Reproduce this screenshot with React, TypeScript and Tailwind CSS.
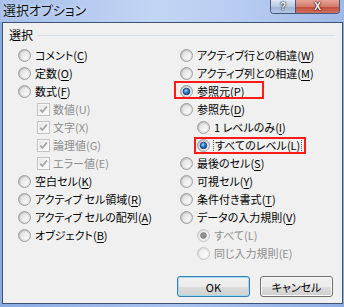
import React from "react";

function Radio({ checked = false, disabled = false }: { checked?: boolean; disabled?: boolean }) {
  const k = disabled ? "d" : "n";
  return (
    <svg width="13" height="13" viewBox="0 0 13 13" className="shrink-0">
      <defs>
        <linearGradient id={`ro-${k}`} x1="0" y1="0" x2="1" y2="1">
          <stop offset="0" stopColor={disabled ? "#d6d6d6" : "#b4b4b4"} />
          <stop offset="1" stopColor={disabled ? "#f6f6f6" : "#f3f3f3"} />
        </linearGradient>
        <linearGradient id={`ri-${k}`} x1="0" y1="0" x2="1" y2="1">
          <stop offset="0" stopColor={disabled ? "#ececec" : "#dcdcdc"} />
          <stop offset="1" stopColor="#ffffff" />
        </linearGradient>
        <radialGradient id="rdot" cx="0.4" cy="0.35" r="0.7">
          <stop offset="0" stopColor="#9ad6ff" />
          <stop offset="0.5" stopColor="#2a7ccd" />
          <stop offset="1" stopColor="#0e3c82" />
        </radialGradient>
      </defs>
      <circle cx="6.5" cy="6.5" r="6" fill={`url(#ro-${k})`} stroke={disabled ? "#c6c6c6" : "#a0a0a0"} />
      <circle cx="6.5" cy="6.5" r="4.2" fill={`url(#ri-${k})`} />
      {checked &&
        (disabled ? (
          <circle cx="6.5" cy="6.5" r="3" fill="#909090" stroke="#777" strokeWidth="0.6" />
        ) : (
          <circle cx="6.5" cy="6.5" r="3.3" fill="url(#rdot)" stroke="#0c3370" strokeWidth="0.8" />
        ))}
    </svg>
  );
}

function Check() {
  return (
    <svg width="13" height="13" viewBox="0 0 13 13" className="shrink-0">
      <defs>
        <linearGradient id="cbg" x1="0" y1="0" x2="1" y2="1">
          <stop offset="0" stopColor="#e6e6e6" />
          <stop offset="1" stopColor="#fdfdfd" />
        </linearGradient>
      </defs>
      <rect x="0.5" y="0.5" width="12" height="12" fill="#f6f6f6" stroke="#c2c2c2" />
      <rect x="2" y="2" width="9" height="9" fill="url(#cbg)" />
      <path d="M3.2 6.6 L5.4 9 L9.8 3.6" stroke="#a4a4a4" strokeWidth="1.7" fill="none" />
    </svg>
  );
}

function Text({ label, m, disabled = false }: { label: string; m: string; disabled?: boolean }) {
  return (
    <span className={`whitespace-pre ${disabled ? "text-[#8e8e8e]" : "text-black"}`}>
      {label}(
      {disabled ? m : <u className="underline decoration-1 underline-offset-[2px]">{m}</u>})
    </span>
  );
}

function RRow({
  label,
  m,
  checked,
  disabled,
  indent = false,
}: {
  label: string;
  m: string;
  checked?: boolean;
  disabled?: boolean;
  indent?: boolean;
}) {
  return (
    <div className={`flex h-[18px] items-center gap-[4px] ${indent ? "pl-[17px]" : ""}`}>
      <Radio checked={checked} disabled={disabled} />
      <Text label={label} m={m} disabled={disabled} />
    </div>
  );
}

function CRow({ label, m }: { label: string; m: string }) {
  return (
    <div className="flex h-[18px] items-center gap-[3px] pl-[19px]">
      <Check />
      <Text label={label} m={m} disabled />
    </div>
  );
}

export default function App() {
  return (
    <div className="flex h-[307px] w-[344px] flex-col overflow-hidden bg-[linear-gradient(to_right,#8aabe2,#a9c3ee_50%,#8eaee3)] font-['Noto_Sans_CJK_JP',sans-serif] text-[11px] leading-[18px] [font-feature-settings:'palt']">
      {/* title bar */}
      <div className="flex h-[22px] shrink-0 items-start bg-[linear-gradient(to_right,#a6bfea,#c2d5f4_45%,#b7ccf1_70%,#9fb9e7)]">
        <div className="pl-[3px] pt-[1px] text-[13px] leading-[18px] text-[#111] [text-shadow:0_0_5px_#e8f0ff]">
          選択オプション
        </div>
        <div className="ml-auto mr-[4px] flex h-[14px] overflow-hidden rounded-b-[4px] border border-t-0 border-[#47577a]">
          <div className="flex w-[25px] items-center justify-center border-r border-[#47577a] bg-[linear-gradient(to_bottom,#dde6f4,#b9c9e2_50%,#9fb3d6_51%,#b3c6e6)] font-['Liberation_Sans',sans-serif] text-[10px] font-bold leading-[12px] text-white [text-shadow:0_0_1px_#233,0_0_1px_#233,0_0_2px_#233]">
            ?
          </div>
          <div className="flex w-[43px] items-center justify-center bg-[linear-gradient(to_bottom,#e6a597,#d47a6c_50%,#c24a3a_51%,#d0705e)] font-['Liberation_Sans',sans-serif] text-[10px] font-bold leading-[12px] text-white [text-shadow:0_0_1px_#401010,0_0_1px_#401010,0_0_2px_#401010]">
            X
          </div>
        </div>
      </div>

      {/* client */}
      <div className="mb-[3px] ml-[2px] mr-[1px] flex flex-1 flex-col border border-[#3e5274] bg-[#f0f0f0]">
        <div className="mt-[4px] flex h-[16px] items-center pl-[6px] pr-[7px]">
          <span className="text-[12px] leading-[16px] text-black">選択</span>
          <div className="ml-[4px] h-px flex-1 bg-[#d5dfe5]" />
        </div>
        <div className="mt-[3px] grid grid-cols-[177px_1fr]">
          <div className="flex flex-col pl-[15px]">
            <RRow label="コメント" m="C" />
            <RRow label="定数" m="O" />
            <RRow label="数式" m="F" />
            <CRow label="数値" m="U" />
            <CRow label="文字" m="X" />
            <CRow label="論理値" m="G" />
            <CRow label="エラー値" m="E" />
            <RRow label="空白セル" m="K" />
            <RRow label="アクティブ セル領域" m="R" />
            <RRow label="アクティブ セルの配列" m="A" />
            <RRow label="オブジェクト" m="B" />
          </div>
          <div className="flex flex-col">
            <RRow label="アクティブ行との相違" m="W" />
            <RRow label="アクティブ列との相違" m="M" />
            <div className="relative">
              <RRow label="参照元" m="P" checked />
              <span className="absolute left-[-6px] top-[-1px] h-[18px] w-[90px] border-2 border-[#ff1a1a]" />
            </div>
            <RRow label="参照先" m="D" />
            <RRow label="1 レベルのみ" m="I" indent />
            <div className="relative">
              <div className="flex h-[18px] items-center gap-[3px] pl-[17px]">
                <Radio checked />
                <span className="border border-dotted border-[#555] px-[1px] leading-[13px]">
                  <Text label="すべてのレベル" m="L" />
                </span>
              </div>
              <span className="absolute left-[14px] top-[1px] h-[17px] w-[112px] border-2 border-[#ff1a1a]" />
            </div>
            <RRow label="最後のセル" m="S" />
            <RRow label="可視セル" m="Y" />
            <RRow label="条件付き書式" m="T" />
            <RRow label="データの入力規則" m="V" />
            <RRow label="すべて" m="L" indent checked disabled />
            <RRow label="同じ入力規則" m="E" indent disabled />
          </div>
        </div>
        <div className="mt-auto flex justify-end gap-[10px] pb-[6px] pr-[9px]">
          <button className="flex h-[21px] w-[73px] items-center justify-center rounded-[3px] border border-[#3c7fb1] bg-[linear-gradient(to_bottom,#f2f2f2,#ebebeb_50%,#dddddd_51%,#cfcfcf)] text-[11px] text-black shadow-[inset_0_0_0_1px_#9fdcf6]">
            OK
          </button>
          <button className="flex h-[21px] w-[73px] items-center justify-center rounded-[3px] border border-[#707070] bg-[linear-gradient(to_bottom,#f2f2f2,#ebebeb_50%,#dddddd_51%,#cfcfcf)] text-[11px] text-black shadow-[inset_0_0_0_1px_#fbfbfb]">
            キャンセル
          </button>
        </div>
      </div>
    </div>
  );
}
